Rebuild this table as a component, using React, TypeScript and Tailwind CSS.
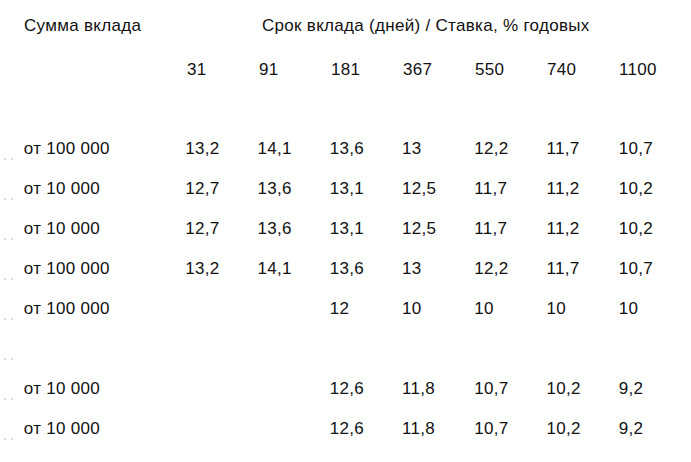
const cols = ["31", "91", "181", "367", "550", "740", "1100"];

type Row = { label: string; rates: string[] };

const rows: Row[] = [
  { label: "от 100 000", rates: ["13,2", "14,1", "13,6", "13", "12,2", "11,7", "10,7"] },
  { label: "от 10 000", rates: ["12,7", "13,6", "13,1", "12,5", "11,7", "11,2", "10,2"] },
  { label: "от 10 000", rates: ["12,7", "13,6", "13,1", "12,5", "11,7", "11,2", "10,2"] },
  { label: "от 100 000", rates: ["13,2", "14,1", "13,6", "13", "12,2", "11,7", "10,7"] },
  { label: "от 100 000", rates: ["", "", "12", "10", "10", "10", "10"] },
  { label: "", rates: ["", "", "", "", "", "", ""] },
  { label: "от 10 000", rates: ["", "", "12,6", "11,8", "10,7", "10,2", "9,2"] },
  { label: "от 10 000", rates: ["", "", "12,6", "11,8", "10,7", "10,2", "9,2"] },
];

function Dots() {
  return (
    <div className="flex h-full w-[24px] items-start gap-[5px] pl-[4px] pt-[29px]">
      <span className="block h-[2px] w-[2px] bg-[#d9d9d9]" />
      <span className="block h-[2px] w-[2px] bg-[#d9d9d9]" />
    </div>
  );
}

export default function App() {
  return (
    <div
      className="min-h-[462px] w-[691px] bg-white pt-[6px] text-[17px] tracking-[0.3px] text-[#111]"
      style={{ fontFamily: '"Liberation Sans", Arial, sans-serif' }}
    >
      <div className="flex h-[40px] items-center">
        <div className="w-[262px] pl-[24px]">Сумма вклада</div>
        <div>Срок вклада (дней) / Ставка, % годовых</div>
      </div>

      <div className="mt-[4px] flex h-[40px] items-center pl-[187px]">
        {cols.map((c) => (
          <div key={c} className="w-[73px]">
            {c}
          </div>
        ))}
      </div>

      <div className="h-[39px]" />

      {rows.map((r, i) => (
        <div key={i} className="flex h-[40px]">
          <Dots />
          <div className="flex w-[163px] items-center">{r.label}</div>
          {r.rates.map((v, j) => (
            <div key={j} className="flex w-[73px] items-center">
              {v}
            </div>
          ))}
        </div>
      ))}
    </div>
  );
}
